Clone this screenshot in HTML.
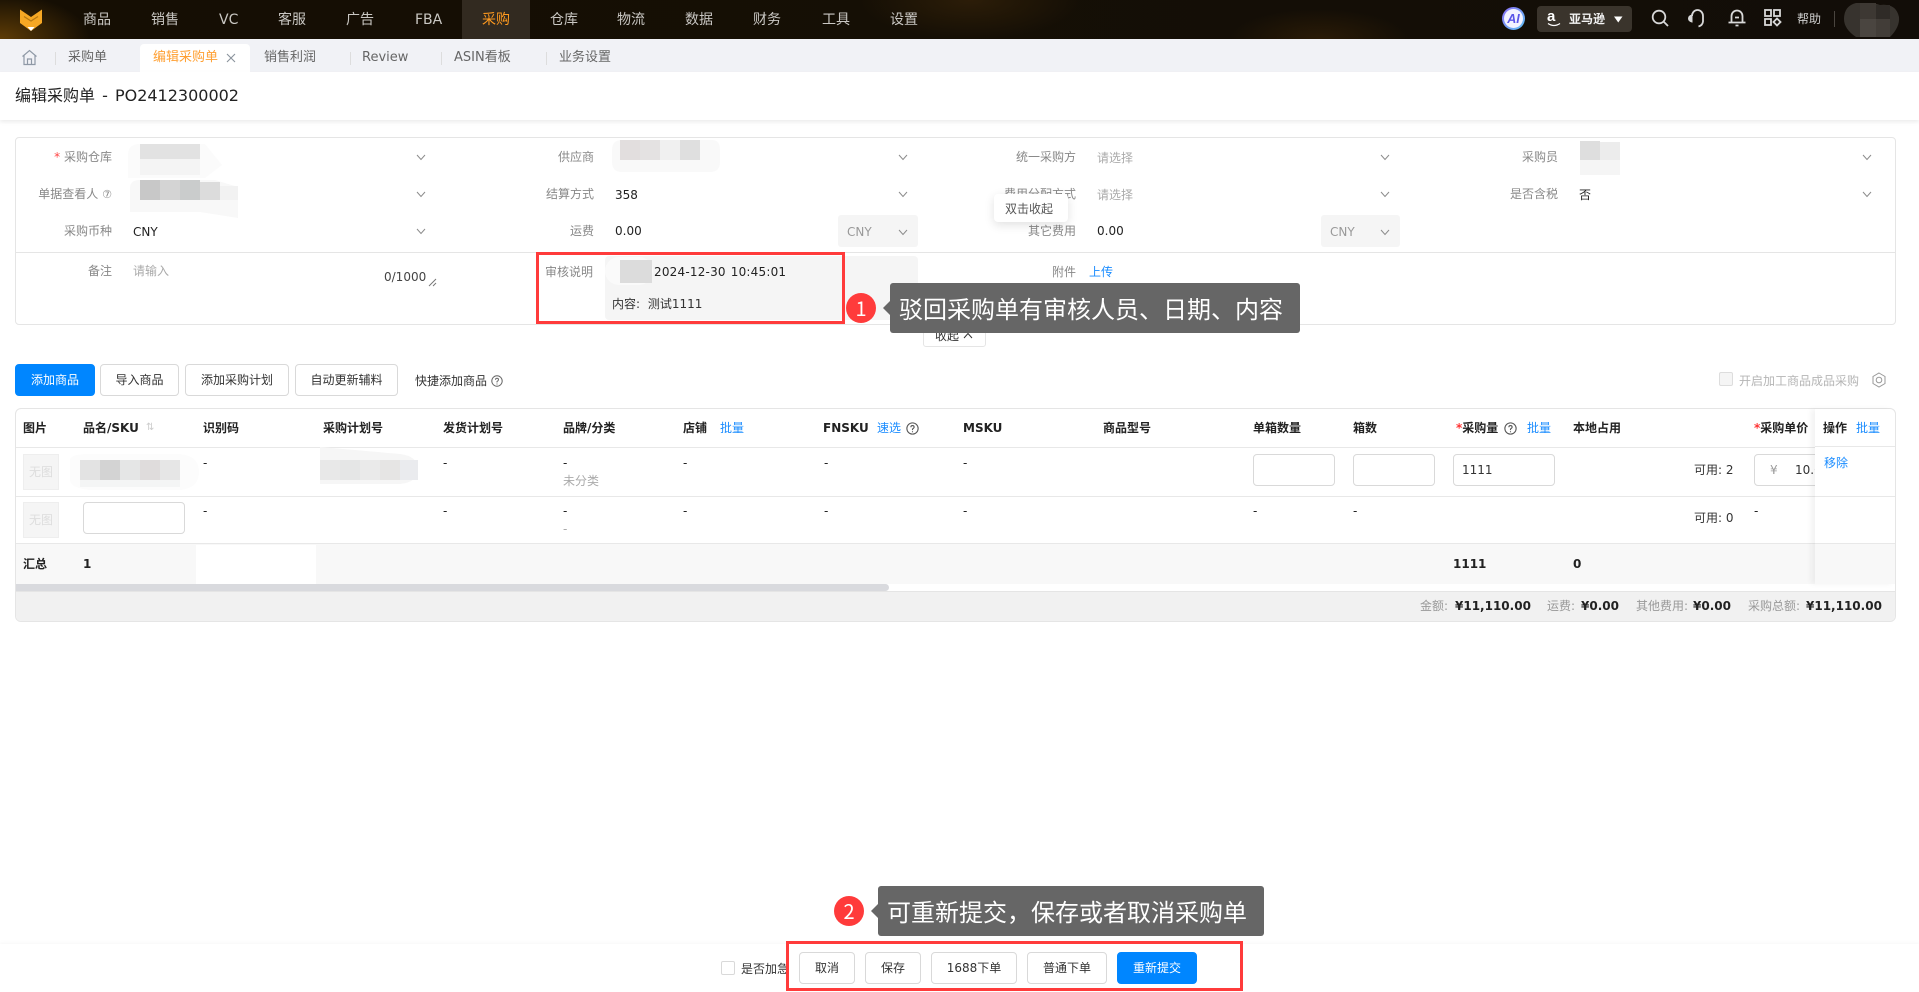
<!DOCTYPE html>
<html lang="zh"><head><meta charset="utf-8"><title>编辑采购单</title>
<style>
html,body{margin:0;padding:0;width:1919px;height:992px;overflow:hidden;background:#fff}
body{position:relative;font:12px/16px "DejaVu Sans","WenQuanYi Zen Hei","Noto Sans CJK SC",sans-serif;color:#222}
.a,.t,.l,.r{position:absolute;box-sizing:border-box}
.t,.l,.r{white-space:nowrap;height:16px;line-height:16px}
.l{color:#888;text-align:right}
.g{color:#aaa}.b{color:#1a8cff}.h{font-weight:700;color:#222}
.nav{font-size:14px;color:#c9c7c3;top:11px;height:18px;line-height:18px}
.tab{font-size:13px;color:#666;top:50px}
.sep{position:absolute;width:1px;height:13px;top:52px;background:#ddd}
.btn{position:absolute;box-sizing:border-box;border:1px solid #d9d9d9;border-radius:4px;background:#fff;text-align:center;color:#333;font-size:12px}
.pri{background:#0086ff;border-color:#0086ff;color:#fff}
.in{position:absolute;box-sizing:border-box;border:1px solid #d9d9d9;border-radius:4px;background:#fff}
.tip{position:absolute;background:#666;border-radius:3px;color:#fff;font-size:24px;height:50px;line-height:50px;box-sizing:border-box;white-space:nowrap;font-family:"Noto Sans CJK SC",sans-serif}
.tip:before{content:"";position:absolute;left:-7px;top:18px;border-right:7px solid #666;border-top:7px solid transparent;border-bottom:7px solid transparent}
.bd{position:absolute;width:30px;height:30px;border-radius:50%;background:#ff3b3b;color:#fff;font-size:20px;line-height:30px;text-align:center;font-family:"Noto Sans CJK SC",sans-serif}
.red{position:absolute;box-sizing:border-box;border:3px solid #ff3b3b}
.ng{position:absolute;left:23px;width:36px;height:36px;background:#f5f5f5;border:1px solid #eee;box-sizing:border-box;color:#ddd;font-size:12px;line-height:34px;text-align:center}
svg{position:absolute;overflow:visible}
</style></head><body>

<!-- header -->
<div class="a" style="left:0;top:0;width:1919px;height:39px;background:radial-gradient(ellipse 90px 45px at 0 39px,#5e3c06 0,rgba(94,60,6,0) 100%),radial-gradient(ellipse 110px 40px at 970px 0,#2c1d08 0,rgba(44,29,8,0) 100%),radial-gradient(ellipse 90px 30px at 1320px 39px,#2a1b07 0,rgba(42,27,7,0) 100%),linear-gradient(90deg,#150e03,#150f05 50%,#120d08)"></div>
<div class="a" style="left:462px;top:0;width:68px;height:39px;background:#322a20"></div>
<svg style="left:0;top:0" width="60" height="39" viewBox="0 0 60 39"><path d="M20 9.5L31 17 42 9.5V23L31 31 20 23Z" fill="#f7a824"/><path d="M24 16.5L31 21 38 16.5" fill="none" stroke="#b87a12" stroke-width="1.2"/><path d="M27.5 27H34.500L31 31Z" fill="#fff"/></svg>
<span class="t nav" style="left:83px">商品</span>
<span class="t nav" style="left:151px">销售</span>
<span class="t nav" style="left:219px">VC</span>
<span class="t nav" style="left:278px">客服</span>
<span class="t nav" style="left:346px">广告</span>
<span class="t nav" style="left:415px">FBA</span>
<span class="t nav" style="left:482px;color:#ff9a1f">采购</span>
<span class="t nav" style="left:550px">仓库</span>
<span class="t nav" style="left:617px">物流</span>
<span class="t nav" style="left:685px">数据</span>
<span class="t nav" style="left:753px">财务</span>
<span class="t nav" style="left:822px">工具</span>
<span class="t nav" style="left:890px">设置</span>

<!-- header right -->
<svg style="left:1502px;top:7px" width="23" height="23" viewBox="0 0 23 23"><defs><linearGradient id="ai" x1="0" y1="0" x2="1" y2="1"><stop offset="0" stop-color="#8a6cf5"/><stop offset="1" stop-color="#5fc4f5"/></linearGradient></defs><circle cx="11.500" cy="11.500" r="11.500" fill="url(#ai)"/><circle cx="11.500" cy="11.500" r="9.500" fill="#f2f2ff"/><text x="11.500" y="16" text-anchor="middle" font-size="12.500" font-weight="700" font-style="italic" fill="#5a55e8" font-family="Liberation Sans">AI</text></svg>
<div class="a" style="left:1537px;top:6px;width:95px;height:26px;background:#3a342c;border-radius:4px"></div>
<span class="t" style="left:1547px;top:8px;font:700 15px/18px 'Liberation Sans',sans-serif;color:#fff">a</span>
<svg style="left:1547px;top:22px" width="15" height="6" viewBox="0 0 15 6"><path d="M1 1.500Q7 5.500 13 1.500" fill="none" stroke="#fff" stroke-width="1.300"/></svg>
<span class="t" style="left:1569px;top:11px;color:#f2f2f2;font-weight:700">亚马逊</span>
<svg style="left:1614px;top:16px" width="9" height="7" viewBox="0 0 9 7"><path d="M0 .5H8.500L4.250 6.500Z" fill="#fff"/></svg>
<svg style="left:1650px;top:8px" width="20" height="20" viewBox="0 0 20 20" fill="none" stroke="#d8d8d8" stroke-width="1.800"><circle cx="9" cy="9" r="6.300"/><path d="M13.500 13.500L18 18"/></svg>
<svg style="left:1687px;top:8px" width="20" height="20" viewBox="0 0 20 20" fill="none" stroke="#d8d8d8" stroke-width="1.800"><path d="M5 8A5.500 6 0 0 1 16 8V13.500Q15.500 17.500 11.500 18.500"/><path d="M5 7Q1.500 8 1.500 10.500T5 14Z" fill="#d8d8d8" stroke-width="1"/></svg>
<svg style="left:1727px;top:8px" width="20" height="20" viewBox="0 0 20 20" fill="none" stroke="#d8d8d8" stroke-width="1.800"><path d="M4.500 14.500V8a5.500 5.500 0 0 1 11 0v6.500M1.500 14.500h17M8 9.500h4M8.500 17.500h3"/></svg>
<svg style="left:1763px;top:8px" width="19" height="19" viewBox="0 0 19 19" fill="none" stroke="#d8d8d8" stroke-width="1.800"><rect x="2" y="2" width="6" height="6"/><rect x="11" y="2" width="6" height="6"/><rect x="2" y="11" width="6" height="6"/><path d="M14 10.500L17.500 14 14 17.500 10.500 14Z"/></svg>
<span class="t" style="left:1797px;top:11px;color:#cfcfcf">帮助</span>
<div class="a" style="left:1834px;top:11px;width:1px;height:16px;background:#4a453f"></div>
<svg style="left:1844px;top:3px" width="56" height="36" viewBox="0 0 56 36"><path d="M12 0H24Q30 0 36 2 52 0 55 14 56 24 46 34H12Q0 26 0 16 0 3 12 0Z" fill="#37332e"/><rect x="16" y="0" width="16" height="16" fill="#3d3833"/><rect x="16" y="16" width="16" height="18" fill="#4a4540"/><rect x="32" y="16" width="14" height="18" fill="#423d38"/><rect x="32" y="2" width="14" height="14" fill="#2f2b27"/></svg>

<!-- tab bar -->
<div class="a" style="left:0;top:39px;width:1919px;height:33px;background:#f1f2f6"></div>
<svg style="left:21px;top:49px" width="17" height="17" viewBox="0 0 17 17" fill="none" stroke="#8f99a6" stroke-width="1.200"><path d="M1.500 7.500L8.500 1.500 15.500 7.500M3 6.500V15.500H14V6.500M6.500 15.500V10H10.500V15.500"/></svg>
<div class="sep" style="left:55px"></div>
<span class="t tab" style="left:68px">采购单</span>
<div class="a" style="left:140px;top:44px;width:110px;height:28px;background:#fff;border-radius:4px 4px 0 0"></div>
<span class="t tab" style="left:153px;color:#ffa033">编辑采购单</span>
<svg style="left:226px;top:53px" width="10" height="10" viewBox="0 0 10 10" fill="none" stroke="#8a929c" stroke-width="1.100"><path d="M1 1L9 9M9 1L1 9"/></svg>
<span class="t tab" style="left:264px">销售利润</span>
<div class="sep" style="left:350px"></div>
<span class="t tab" style="left:362px">Review</span>
<div class="sep" style="left:441px"></div>
<span class="t tab" style="left:454px">ASIN看板</span>
<div class="sep" style="left:546px"></div>
<span class="t tab" style="left:559px">业务设置</span>

<!-- title -->
<div class="a" style="left:0;top:72px;width:1919px;height:48px;background:#fff;box-shadow:0 2px 4px rgba(0,0,0,.08)"></div>
<span class="t" style="left:15px;top:86px;font-size:16px;height:20px;line-height:20px;color:#222;word-spacing:2px">编辑采购单 - PO2412300002</span>

<!-- form card -->
<div class="a" style="left:15px;top:137px;width:1881px;height:188px;border:1px solid #e5e5e5;border-radius:4px"></div>
<div class="a" style="left:15px;top:252px;width:1881px;height:1px;background:#e5e5e5"></div>

<span class="r l" style="right:1807px;top:149px"><span style="color:#f44">*</span> 采购仓库</span>
<span class="r l" style="right:1325px;top:149px">供应商</span>
<span class="r l" style="right:843px;top:149px">统一采购方</span>
<span class="r l" style="right:361px;top:149px">采购员</span>
<span class="r l" style="right:1807px;top:186px">单据查看人 <span style="font-size:11px">⑦</span></span>
<span class="r l" style="right:1325px;top:186px">结算方式</span>
<span class="r l" style="right:843px;top:186px">费用分配方式</span>
<span class="r l" style="right:361px;top:186px">是否含税</span>
<span class="r l" style="right:1807px;top:223px">采购币种</span>
<span class="r l" style="right:1325px;top:223px">运费</span>
<span class="r l" style="right:843px;top:223px">其它费用</span>
<span class="r l" style="right:1807px;top:263px">备注</span>
<span class="r l" style="right:1326px;top:264px">审核说明</span>
<span class="r l" style="right:843px;top:264px">附件</span>

<span class="t" style="left:615px;top:187px">358</span>
<span class="t g" style="left:1097px;top:150px">请选择</span>
<span class="t g" style="left:1097px;top:187px">请选择</span>
<span class="t" style="left:1579px;top:187px">否</span>
<span class="t" style="left:133px;top:224px">CNY</span>
<span class="t" style="left:615px;top:223px">0.00</span>
<span class="t" style="left:1097px;top:223px">0.00</span>
<span class="t g" style="left:133px;top:263px">请输入</span>
<span class="t" style="left:384px;top:269px;color:#444">0/1000</span>
<svg style="left:429px;top:279px" width="7" height="7" viewBox="0 0 7 7" stroke="#777" fill="none"><path d="M0 7L7 0M4 7L7 4"/></svg>
<span class="t b" style="left:1089px;top:264px">上传</span>

<div class="a" style="left:838px;top:215px;width:80px;height:32px;background:#f5f5f5;border-radius:3px"></div>
<span class="t" style="left:847px;top:224px;color:#999">CNY</span>
<div class="a" style="left:1321px;top:215px;width:79px;height:32px;background:#f5f5f5;border-radius:3px"></div>
<span class="t" style="left:1330px;top:224px;color:#999">CNY</span>

<svg style="left:0;top:0" width="1919" height="260" fill="none" stroke="#8c8c8c" stroke-width="1"><path d="M417 155L421 159.500 425 155M899 155L903 159.500 907 155M1381 155L1385 159.500 1389 155M1863 155L1867 159.500 1871 155M417 192L421 196.500 425 192M899 192L903 196.500 907 192M1381 192L1385 196.500 1389 192M1863 192L1867 196.500 1871 192M417 229L421 233.500 425 229M899 230L903 234.500 907 230M1381 230L1385 234.500 1389 230"/></svg>

<!-- audit box -->
<div class="a" style="left:605px;top:256px;width:313px;height:64px;background:#f5f5f5;border-radius:4px"></div>
<div class="a" style="left:605px;top:257px;width:48px;height:28px;background:#fafafa;border-radius:14px"></div>
<div class="a" style="left:620px;top:260px;width:32px;height:23px;background:#dcdcdc"></div>
<span class="t" style="left:654px;top:264px;color:#222;letter-spacing:.2px;word-spacing:1px">2024-12-30 10:45:01</span>
<span class="t" style="left:612px;top:296px;color:#333;word-spacing:4px">内容: 测试1111</span>

<!-- blurred blocks in the form -->
<svg style="left:0;top:0" width="1919" height="240">
<path d="M128 155Q128 144 140 144H205L222 165 205 178H128Z" fill="#fbfbfb"/>
<rect x="140" y="144" width="60" height="15" fill="#e2e2e2"/><rect x="140" y="159" width="60" height="16" fill="#f4f4f4"/>
<path d="M130 188Q130 180 140 180H215L238 187V218L200 212H130Z" fill="#f8f8f8"/>
<rect x="140" y="180" width="20" height="20" fill="#c8c8c8"/><rect x="160" y="180" width="20" height="20" fill="#d4d4d4"/><rect x="180" y="180" width="20" height="20" fill="#cacccc"/><rect x="200" y="182" width="20" height="18" fill="#dcdcdc"/><rect x="220" y="186" width="18" height="14" fill="#f2f2f2"/>
<path d="M612 150Q612 140 622 140H712Q720 140 720 150V162Q720 172 710 172H622Q612 172 612 162Z" fill="#f9f9f9"/>
<rect x="620" y="140" width="20" height="20" fill="#e2dede"/><rect x="640" y="140" width="20" height="20" fill="#e4e2e2"/><rect x="660" y="140" width="20" height="20" fill="#f0f0f0"/><rect x="680" y="140" width="20" height="20" fill="#dfdfdf"/>
<rect x="1580" y="141" width="20" height="19" fill="#dedede"/><rect x="1600" y="142" width="20" height="18" fill="#ececec"/><rect x="1580" y="160" width="40" height="15" fill="#f5f5f5"/>
</svg>

<!-- double-click tip -->
<div class="a" style="left:994px;top:194px;width:74px;height:28px;background:#fff;border-radius:4px;box-shadow:0 3px 10px rgba(0,0,0,.12)"></div>
<span class="t" style="left:1005px;top:201px;color:#555">双击收起</span>

<!-- collapse -->
<div class="a" style="left:923px;top:320px;width:63px;height:27px;background:#fff;border:1px solid #e5e5e5;border-radius:3px"></div>
<span class="t" style="left:935px;top:328px;color:#333">收起</span>
<svg style="left:963px;top:332px" width="10" height="7" viewBox="0 0 10 7" fill="none" stroke="#333"><path d="M1 6L5 1.500 9 6"/></svg>

<!-- annotation 1 -->
<div class="red" style="left:536px;top:252px;width:309px;height:72px"></div>
<div class="bd" style="left:846px;top:293px">1</div>
<div class="tip" style="left:890px;top:283px;width:410px;padding-left:9px">驳回采购单有审核人员、日期、内容</div>

<!-- toolbar -->
<div class="btn pri" style="left:15px;top:364px;width:80px;height:32px;line-height:30px">添加商品</div>
<div class="btn" style="left:100px;top:364px;width:79px;height:32px;line-height:30px">导入商品</div>
<div class="btn" style="left:185px;top:364px;width:104px;height:32px;line-height:30px">添加采购计划</div>
<div class="btn" style="left:295px;top:364px;width:103px;height:32px;line-height:30px">自动更新辅料</div>
<span class="t" style="left:415px;top:373px;color:#333">快捷添加商品</span>
<svg style="left:491px;top:375px" width="12" height="12" viewBox="0 0 12 12" fill="none" stroke="#666"><circle cx="6" cy="6" r="5.200"/><path d="M4.500 4.800Q4.500 3.300 6 3.300T7.500 4.700Q7.500 5.500 6 6.500V7.500M6 8.500V9.500"/></svg>
<div class="a" style="left:1719px;top:372px;width:14px;height:14px;background:#f5f5f5;border:1px solid #ddd;border-radius:2px"></div>
<span class="t" style="left:1739px;top:373px;color:#b5b5b5">开启加工商品成品采购</span>
<svg style="left:1871px;top:372px" width="16" height="16" viewBox="0 0 16 16" fill="none" stroke="#999"><path d="M8 1L14 4.500V11.500L8 15 2 11.500V4.500Z"/><circle cx="8" cy="8" r="2.800"/></svg>

<!-- table -->
<div class="a" style="left:15px;top:408px;width:1881px;height:214px;border:1px solid #e5e5e5;border-radius:6px;overflow:hidden;background:#fff">
  <div class="a" style="left:0;top:134px;width:1880px;height:41px;background:#f8f8f8"></div>
  <div class="a" style="left:180px;top:136px;width:120px;height:39px;background:#fff"></div>
  <div class="a" style="left:0;top:182px;width:1880px;height:31px;background:#f1f1f1"></div>
  <div class="a" style="left:0;top:175px;width:1880px;height:7px;background:#fff"></div>
  <div class="a" style="left:0;top:175px;width:873px;height:7px;background:#d9dade;border-radius:0 4px 4px 0"></div>
  <div class="a" style="left:0;top:182px;width:1880px;height:1px;background:#e5e5e5"></div>
  <div class="a" style="left:0;top:38px;width:1880px;height:1px;background:#e8e8e8"></div>
  <div class="a" style="left:0;top:87px;width:1880px;height:1px;background:#e8e8e8"></div>
  <div class="a" style="left:0;top:134px;width:1880px;height:1px;background:#e8e8e8"></div>
</div>

<!-- blurred blocks in the table -->
<svg style="left:0;top:0" width="1919" height="600">
<path d="M70 460Q70 454 90 454H180Q199 456 199 472 199 488 180 490H90Q70 488 70 480Z" fill="#fcfcfc"/>
<rect x="80" y="460" width="20" height="20" fill="#e3e3e3"/><rect x="100" y="460" width="20" height="20" fill="#d3d3d3"/><rect x="120" y="460" width="20" height="20" fill="#e5e6e6"/><rect x="140" y="460" width="20" height="20" fill="#dfdcdc"/><rect x="160" y="460" width="20" height="20" fill="#e6e6e6"/>
<rect x="80" y="480" width="100" height="7" fill="#f4f5f5"/>
<path d="M320 447L400 454Q418 456 418 470 418 482 400 484H320Z" fill="#f6f6f6"/>
<rect x="320" y="460" width="20" height="20" fill="#e8e8e8"/><rect x="340" y="460" width="20" height="20" fill="#e5e6e6"/><rect x="360" y="460" width="20" height="20" fill="#eaeaea"/><rect x="380" y="460" width="20" height="20" fill="#e6e5e4"/><rect x="400" y="460" width="18" height="20" fill="#eaebee"/>
</svg>

<span class="t h" style="left:23px;top:420px">图片</span>
<span class="t h" style="left:83px;top:420px">品名/SKU</span>
<span class="t" style="left:146px;top:420px;color:#ccc;font-size:10px">⇅</span>
<span class="t h" style="left:203px;top:420px">识别码</span>
<span class="t h" style="left:323px;top:420px">采购计划号</span>
<span class="t h" style="left:443px;top:420px">发货计划号</span>
<span class="t h" style="left:563px;top:420px">品牌/分类</span>
<span class="t h" style="left:683px;top:420px">店铺</span>
<span class="t b" style="left:720px;top:420px">批量</span>
<span class="t h" style="left:823px;top:420px">FNSKU</span>
<span class="t b" style="left:877px;top:420px">速选</span>
<svg style="left:906px;top:422px" width="13" height="13" viewBox="0 0 12 12" fill="none" stroke="#555"><circle cx="6" cy="6" r="5.200"/><path d="M4.500 4.800Q4.500 3.300 6 3.300T7.500 4.700Q7.500 5.500 6 6.500V7.500M6 8.500V9.500"/></svg>
<span class="t h" style="left:963px;top:420px">MSKU</span>
<span class="t h" style="left:1103px;top:420px">商品型号</span>
<span class="t h" style="left:1253px;top:420px">单箱数量</span>
<span class="t h" style="left:1353px;top:420px">箱数</span>
<span class="t h" style="left:1456px;top:420px"><span style="color:#f33">*</span>采购量</span>
<svg style="left:1504px;top:422px" width="13" height="13" viewBox="0 0 12 12" fill="none" stroke="#555"><circle cx="6" cy="6" r="5.200"/><path d="M4.500 4.800Q4.500 3.300 6 3.300T7.500 4.700Q7.500 5.500 6 6.500V7.500M6 8.500V9.500"/></svg>
<span class="t b" style="left:1527px;top:420px">批量</span>
<span class="t h" style="left:1573px;top:420px">本地占用</span>
<span class="t h" style="left:1754px;top:420px"><span style="color:#f33">*</span>采购单价</span>

<div class="ng" style="top:454px">无图</div>
<div class="ng" style="top:502px">无图</div>
<span class="t" style="left:203px;top:455px">-</span>
<span class="t" style="left:443px;top:455px">-</span>
<span class="t" style="left:563px;top:455px">-</span>
<span class="t g" style="left:563px;top:473px">未分类</span>
<span class="t" style="left:683px;top:455px">-</span>
<span class="t" style="left:824px;top:455px">-</span>
<span class="t" style="left:963px;top:455px">-</span>
<div class="in" style="left:1253px;top:454px;width:82px;height:32px"></div>
<div class="in" style="left:1353px;top:454px;width:82px;height:32px"></div>
<div class="in" style="left:1453px;top:454px;width:102px;height:32px"></div>
<span class="t" style="left:1462px;top:462px;color:#333">1111</span>
<span class="t" style="left:1694px;top:462px;color:#333">可用: 2</span>
<div class="in" style="left:1754px;top:454px;width:90px;height:32px"></div>
<span class="t" style="left:1770px;top:462px;color:#999">¥</span>
<span class="t" style="left:1795px;top:462px;color:#333">10.00</span>

<div class="in" style="left:83px;top:502px;width:102px;height:32px"></div>
<span class="t" style="left:203px;top:503px">-</span>
<span class="t" style="left:443px;top:503px">-</span>
<span class="t" style="left:563px;top:503px">-</span>
<span class="t g" style="left:563px;top:521px">-</span>
<span class="t" style="left:683px;top:503px">-</span>
<span class="t" style="left:824px;top:503px">-</span>
<span class="t" style="left:963px;top:503px">-</span>
<span class="t" style="left:1253px;top:503px">-</span>
<span class="t" style="left:1353px;top:503px">-</span>
<span class="t" style="left:1694px;top:510px;color:#333">可用: 0</span>
<span class="t" style="left:1754px;top:503px">-</span>

<span class="t h" style="left:23px;top:556px">汇总</span>
<span class="t h" style="left:83px;top:556px">1</span>
<span class="t h" style="left:1453px;top:556px">1111</span>
<span class="t h" style="left:1573px;top:556px">0</span>

<!-- fixed column -->
<div class="a" style="left:1815px;top:409px;width:80px;height:175px;background:#fff;box-shadow:-4px 0 6px rgba(0,0,0,.05);border-radius:0 6px 0 0"></div>
<div class="a" style="left:1815px;top:446px;width:80px;height:1px;background:#e8e8e8"></div>
<div class="a" style="left:1815px;top:496px;width:80px;height:1px;background:#e8e8e8"></div>
<div class="a" style="left:1815px;top:543px;width:80px;height:41px;background:#f8f8f8;border-top:1px solid #e8e8e8"></div>
<span class="t h" style="left:1823px;top:420px">操作</span>
<span class="t b" style="left:1856px;top:420px">批量</span>
<span class="t b" style="left:1824px;top:455px">移除</span>

<!-- table footer -->
<span class="t" style="left:1420px;top:598px;color:#999">金额:</span>
<span class="t h" style="left:1455px;top:598px">¥11,110.00</span>
<span class="t" style="left:1547px;top:598px;color:#999">运费:</span>
<span class="t h" style="left:1581px;top:598px">¥0.00</span>
<span class="t" style="left:1636px;top:598px;color:#999">其他费用:</span>
<span class="t h" style="left:1693px;top:598px">¥0.00</span>
<span class="t" style="left:1748px;top:598px;color:#999">采购总额:</span>
<span class="t h" style="left:1806px;top:598px">¥11,110.00</span>

<!-- bottom bar -->
<div class="a" style="left:0;top:944px;width:1919px;height:48px;background:#fff;box-shadow:0 -1px 4px rgba(0,0,0,.04)"></div>
<div class="a" style="left:721px;top:961px;width:14px;height:14px;background:#fff;border:1px solid #d9d9d9;border-radius:2px"></div>
<span class="t" style="left:741px;top:961px;color:#333">是否加急</span>
<div class="btn" style="left:799px;top:952px;width:56px;height:32px;line-height:30px">取消</div>
<div class="btn" style="left:865px;top:952px;width:56px;height:32px;line-height:30px">保存</div>
<div class="btn" style="left:931px;top:952px;width:86px;height:32px;line-height:30px">1688下单</div>
<div class="btn" style="left:1027px;top:952px;width:80px;height:32px;line-height:30px">普通下单</div>
<div class="btn pri" style="left:1117px;top:952px;width:80px;height:32px;line-height:30px">重新提交</div>

<!-- annotation 2 -->
<div class="red" style="left:786px;top:941px;width:457px;height:50px"></div>
<div class="bd" style="left:834px;top:896px">2</div>
<div class="tip" style="left:878px;top:886px;width:386px;padding-left:9px">可重新提交，保存或者取消采购单</div>

</body></html>
